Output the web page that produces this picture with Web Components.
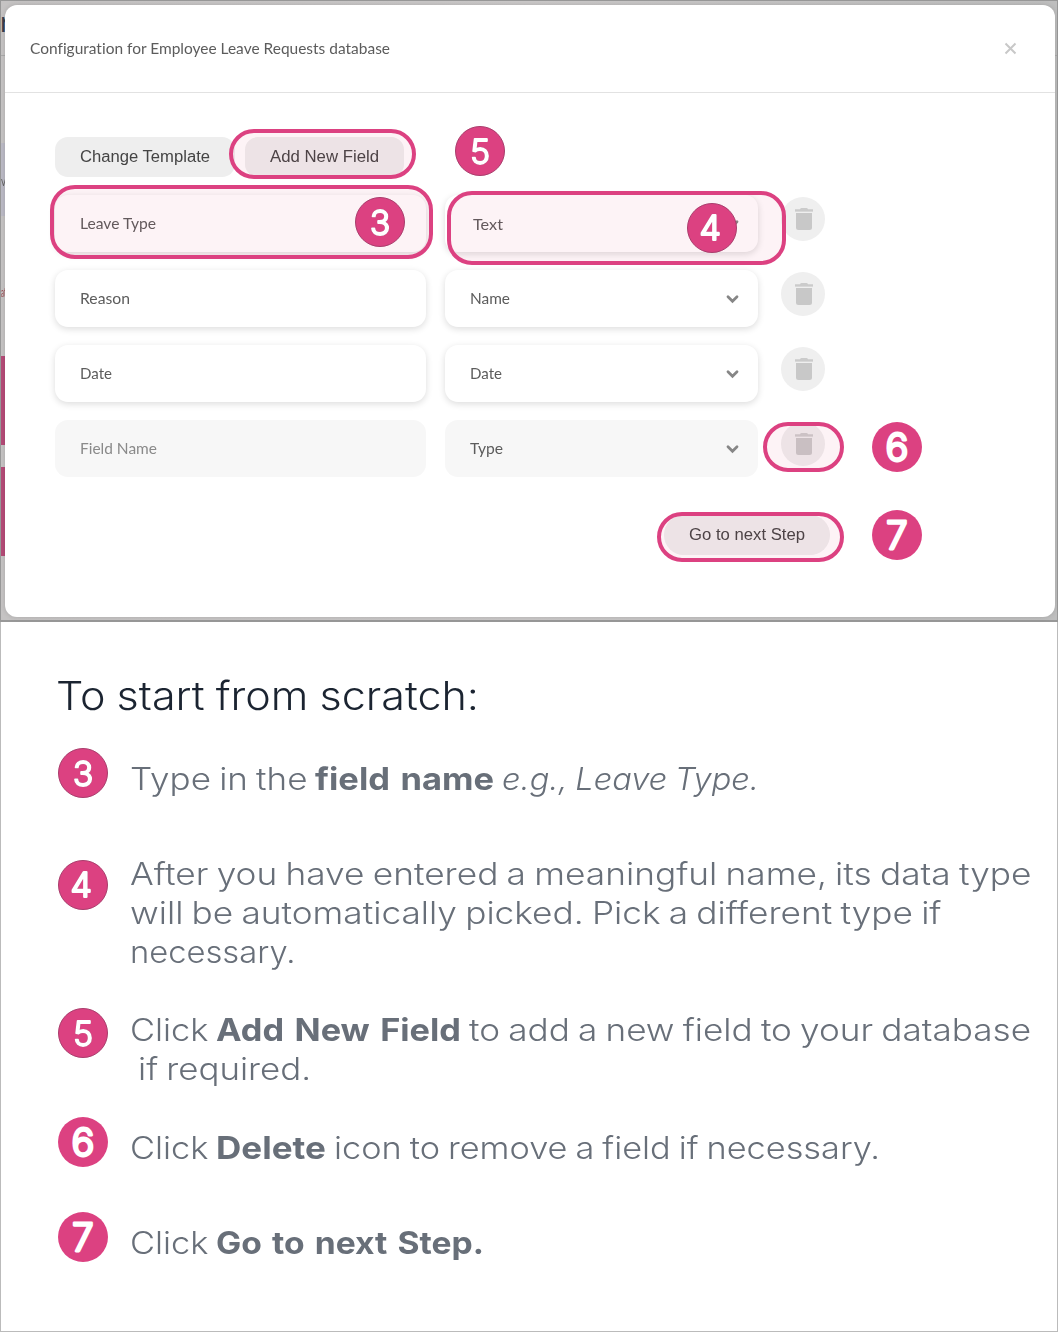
<!DOCTYPE html>
<html lang="en"><head><meta charset="utf-8"><title>Configure database fields</title>
<style>html,body{margin:0;padding:0;background:#fff}body{width:1058px;height:1332px;overflow:hidden}</style></head>
<body><guide-page></guide-page>
<script>
const define=(name,html,setup)=>{
  const t=document.createElement('template');t.innerHTML=html;
  customElements.define(name,class extends HTMLElement{
    connectedCallback(){
      if(this.shadowRoot)return;
      const r=this.attachShadow({mode:'open'});
      r.append(t.content.cloneNode(true));
      if(setup)setup(this,r);
    }
  });
};

/* One run of text, stretched to the width in its w attribute. */
define('fit-text',`<style>:host{display:inline-block;white-space:nowrap;flex:none}span{display:inline-block;transform-origin:0 50%}</style><span><slot></slot></span>`,(el,r)=>{
  const w=+el.getAttribute('w'),s=r.querySelector('span');
  el.style.width=w+'px';
  s.style.transform='scaleX('+w/s.getBoundingClientRect().width+')';
});

define('step-badge',`<style>:host{display:block;width:50px;height:50px;flex:none}svg{display:block;overflow:visible}
text{font-family:Inter,sans-serif;fill:#fff;stroke:#fff;stroke-linejoin:round;stroke-linecap:round;text-anchor:middle}
.t{font-size:34px;font-weight:300;stroke-width:1.8px}.four{stroke-width:2.2px}.b{font-size:38px;font-weight:300;stroke-width:2.800px}</style>
<svg width="50" height="50" viewBox="0 0 50 50"><circle cx="25" cy="25" r="25" fill="#dc4181"/></svg>`,(el,r)=>{
  const n=el.getAttribute('n'),big=n>5,svg=r.querySelector('svg'),ns='http://www.w3.org/2000/svg';
  if(!big){const c=svg.firstElementChild;c.setAttribute('r','24.5');c.setAttribute('stroke','#a93d6c');c.setAttribute('stroke-width','1');}
  const x=document.createElementNS(ns,'text');
  x.textContent=n;x.setAttribute('class',big?'b':n=='4'?'t four':'t');
  x.setAttribute('x',n=='4'?23.2:25);x.setAttribute('y',{3:38,4:37,5:38,6:39,7:39}[n]);
  if(!big)x.style.filter='drop-shadow(0 0 .6px #8d2452)';
  svg.append(x);
});

define('high-light',`<style>:host{display:block;position:absolute;box-sizing:border-box;border:4px solid #dc4181;border-radius:25px;background:rgba(228,50,110,.06)}</style>`,(el)=>{
  const [x,y,w,h]=el.getAttribute('box').split(' ');
  Object.assign(el.style,{left:x+'px',top:y+'px',width:w+'px',height:h+'px'});
});

define('pill-button',`<style>:host{display:flex;box-sizing:border-box;height:40px;align-items:center;padding:0 25px;border-radius:13px;background:#eee;color:#444;font:16px "Liberation Sans",Arial,sans-serif;flex:none}</style><slot></slot>`);

define('bin-button',`<style>:host{display:flex;width:44px;height:44px;margin-left:23px;margin-top:2px;border-radius:50%;background:#efefef;align-items:center;justify-content:center;flex:none}svg{margin-left:2px}</style>
<svg width="18" height="22" viewBox="0 0 18 22"><path d="M5 1.2Q5.5 0 6.5 0h5Q12.500 0 13 1.200H18V3H0V1.200z" fill="#cbcbcb"/><path d="M0 3h18v1H0z" fill="#d8d8d8"/><path d="M1 5h16v14.500Q17 22 14.500 22h-11Q1 22 1 19.500z" fill="#c8c8c8"/></svg>`);

define('field-row',`<style>:host{display:flex;height:57px;font:15px/56px Lato,sans-serif;color:#5c5c5c;font-variant-ligatures:none}
.box{box-sizing:border-box;border-radius:13px;padding:0 25px;background:#fff;box-shadow:0 2px 7px rgba(0,0,0,.14);flex:none}
.n{width:371px}.t{width:313px;margin-left:19px;display:flex;align-items:flex-start;justify-content:space-between;padding-right:18px}svg{margin-top:23.500px}
:host([empty]) .box{background:#f7f7f7;box-shadow:none}:host([empty]) .n{color:#8a8a8a}:host([shift]) .t{padding-left:28px}:host([shift]) .t slot{display:block;margin-top:1px}</style>
<div class="box n"><slot name="name"></slot></div>
<div class="box t"><slot name="type"></slot><svg width="15" height="10" viewBox="0 0 15 10"><path d="M3 2.800 7.500 7.200l4.500-4.400" fill="none" stroke="#868686" stroke-width="2.800" stroke-linecap="round" stroke-linejoin="miter"/></svg></div>
<bin-button></bin-button>`);

/* Page that shows at the edge of the dialog. */
define('page-behind',`<style>:host{display:flex;flex-direction:column;box-sizing:border-box;width:1058px;height:622px;border:1px solid #989898;border-width:1px 1px 2px;background:linear-gradient(90deg,#c5c3c3,#cac8c8 50%,#bebebe)}
div{flex:none;box-sizing:border-box;white-space:nowrap}
.head{height:55px;border-bottom:1px solid #aaa;font:29px/40px Lato,sans-serif;color:#39414c}
.head span{margin-left:-1px}
.bar{margin-top:87px;width:5px;height:73px;background:#bbbac5;font:13px/76px Lato,sans-serif;color:#666}
.link{margin-top:64px;height:24px;width:5px;font:13px/24px Lato,sans-serif;color:#9b4a51}
.p{width:5px;height:89px;background:#b54b77;margin-top:52px}.q{margin-top:22px}</style>
<div class="head"><span>r</span></div><div class="bar"><fit-text w="5">v</fit-text></div><div class="link"><fit-text w="5">at</fit-text></div><div class="p"></div><div class="p q"></div>`);

define('config-dialog',`<style>:host{display:flex;flex-direction:column;position:absolute;left:5px;top:5px;width:1050px;height:612px;border-radius:12px;background:#fff;box-shadow:0 0 5px rgba(0,0,0,.14)}
header{display:flex;justify-content:space-between;align-items:center;box-sizing:border-box;height:88px;border-bottom:1px solid #e2e2e2;padding:0 38px 0 25px;font:15px Lato,sans-serif;font-variant-ligatures:none;color:#5c5c5c;flex:none}header fit-text{margin-bottom:1px}
main{display:flex;flex-direction:column;padding:44px 50px 0}.buttons{display:flex;gap:10px;margin-bottom:18px}.rows{display:flex;flex-direction:column;gap:18px}
.next{margin:38px 0 0 609px;align-self:flex-start;border-radius:20px}</style>
<header><fit-text w="360">Configuration for Employee Leave Requests database</fit-text><svg width="13" height="13" viewBox="0 0 13 13"><path d="m1.500 1.500 10 10m0-10-10 10" stroke="#c8c8c8" stroke-width="2" fill="none"/></svg></header>
<main><div class="buttons"><pill-button><fit-text w="130">Change Template</fit-text></pill-button><pill-button><fit-text w="109">Add New Field</fit-text></pill-button></div>
<div class="rows">
<field-row shift><fit-text slot="name" w="76">Leave Type</fit-text><fit-text slot="type" w="30">Text</fit-text></field-row>
<field-row><fit-text slot="name" w="50">Reason</fit-text><fit-text slot="type" w="40">Name</fit-text></field-row>
<field-row><fit-text slot="name" w="32">Date</fit-text><fit-text slot="type" w="32">Date</fit-text></field-row>
<field-row empty><fit-text slot="name" w="77">Field Name</fit-text><fit-text slot="type" w="33">Type</fit-text></field-row>
</div><pill-button class="next"><fit-text w="116">Go to next Step</fit-text></pill-button></main>`);

define('pinned-badge',`<style>:host{display:block;position:absolute}</style><slot></slot>`,(el)=>{
  const [x,y]=el.getAttribute('at').split(' ');el.style.left=x+'px';el.style.top=y+'px';
});

define('step-item',`<style>:host{display:flex;gap:21.500px;align-items:flex-start}.copy{display:flex;flex-direction:column;font:300 31px/39px Inter,sans-serif;word-spacing:-1.500px;color:#686f79}</style>
<step-badge></step-badge><div class="copy"><slot></slot></div>`,(el,r)=>{
  r.querySelector('.copy').style.marginTop=el.getAttribute('drop')+'px';
  const b=document.createElement('step-badge');
  b.setAttribute('n',el.getAttribute('n'));
  r.querySelector('step-badge').replaceWith(b);
});
customElements.define('text-line',class extends HTMLElement{
  connectedCallback(){if(this.shadowRoot)return;this.attachShadow({mode:'open'}).innerHTML='<style>:host{display:flex;height:39px}</style><slot></slot>';}
});

define('step-list',`<style>:host{display:block;box-sizing:border-box;height:710px;border:1px solid #bbb;border-top:0;padding:48px 0 0 57px;background:#fff}
h1{margin:0 0 0 -2px;height:52px;font:300 39px/52px Inter,sans-serif;word-spacing:-1px;color:#1b2431}b{font-weight:700;word-spacing:2px}
.s3{margin-top:26px;height:112px}.s4{height:148px}.s5{height:109px}.s6{height:95px}</style>
<h1><fit-text w="423">To start from scratch:</fit-text></h1>
<step-item class="s3" n="3" drop="11"><text-line><fit-text w="177.5">Type in the</fit-text><fit-text style="margin-left:8px" w="179"><b>field name</b></fit-text><fit-text style="margin-left:8px" w="257"><i>e.g., Leave Type.</i></fit-text></text-line></step-item>
<step-item class="s4" n="4" drop="-6"><text-line><fit-text w="901.5">After you have entered a meaningful name, its data type</fit-text></text-line><text-line><fit-text w="811.5">will be automatically picked. Pick a different type if</fit-text></text-line><text-line><fit-text w="165.5">necessary.</fit-text></text-line></step-item>
<step-item class="s5" n="5" drop="2"><text-line><fit-text w="78.5">Click</fit-text><fit-text style="margin-left:8px" w="245"><b>Add New Field</b></fit-text><fit-text style="margin-left:8px" w="562">to add a new field to your database</fit-text></text-line><text-line><fit-text style="margin-left:8.5px" w="173">if required.</fit-text></text-line></step-item>
<step-item class="s6" n="6" drop="11"><text-line><fit-text w="78.5">Click</fit-text><fit-text style="margin-left:8px" w="110"><b>Delete</b></fit-text><fit-text style="margin-left:8px" w="546">icon to remove a field if necessary.</fit-text></text-line></step-item>
<step-item n="7" drop="11"><text-line><fit-text w="78.5">Click</fit-text><fit-text style="margin-left:8px" w="268"><b>Go to next Step.</b></fit-text></text-line></step-item>`);

define('guide-page',`<style>:host{display:block;position:relative;width:1058px;height:1332px;overflow:hidden}</style>
<page-behind></page-behind><config-dialog></config-dialog>
<high-light box="229 129 187 50"></high-light><high-light box="50 185 383 74"></high-light><high-light box="447 191 339 74"></high-light><high-light box="763 422 81 50"></high-light><high-light box="657 512 187 50"></high-light>
<pinned-badge at="455 126"><step-badge n="5"></step-badge></pinned-badge><pinned-badge at="355 197"><step-badge n="3"></step-badge></pinned-badge><pinned-badge at="687 203"><step-badge n="4"></step-badge></pinned-badge><pinned-badge at="872 422"><step-badge n="6"></step-badge></pinned-badge><pinned-badge at="872 510"><step-badge n="7"></step-badge></pinned-badge>
<step-list></step-list>`);
</script></body></html>
